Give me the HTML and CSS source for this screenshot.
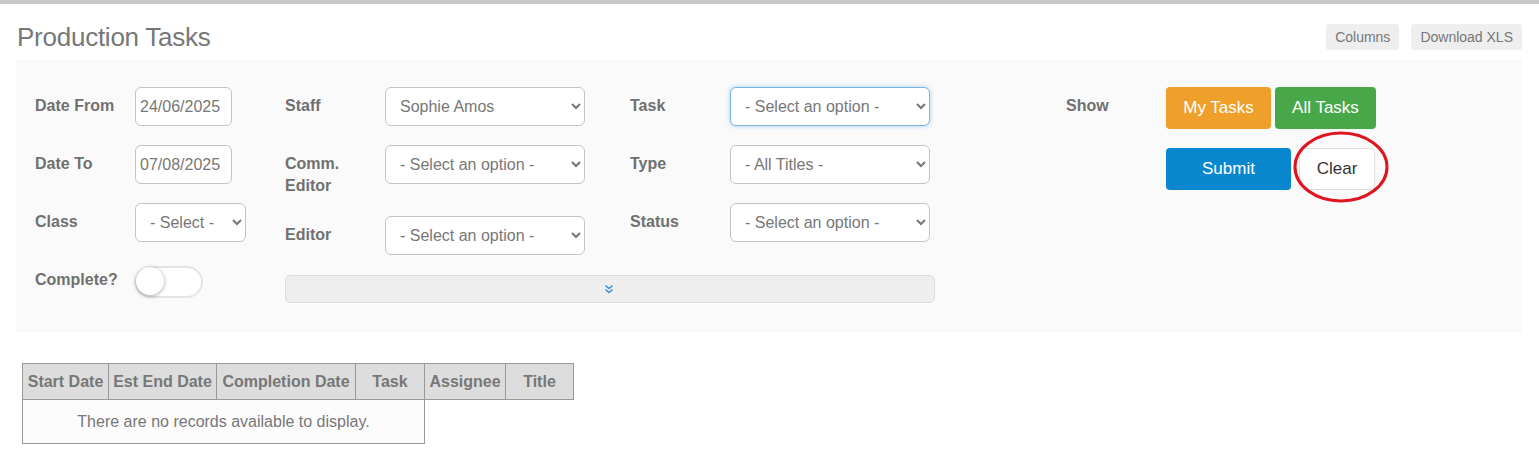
FILE: index.html
```html
<!DOCTYPE html>
<html lang="en">
<head>
  <meta charset="UTF-8">
  <title>Production Tasks</title>
  <link rel="stylesheet" href="styles.css">
</head>
<body>
  <!-- Page header -->
  <header class="page-header">
    <h1>Production Tasks</h1>
    <div class="header-actions">
      <button class="btn-light">Columns</button>
      <button class="btn-light">Download XLS</button>
    </div>
  </header>

  <!-- Filters -->
  <section class="filters">
    <div class="filter-col col-dates">
      <div class="field">
        <label class="label">Date From</label>
        <input class="input input-date" type="text" value="24/06/2025">
      </div>
      <div class="field">
        <label class="label">Date To</label>
        <input class="input input-date" type="text" value="07/08/2025">
      </div>
      <div class="field">
        <label class="label">Class</label>
        <select class="select select-small">
          <option>- Select -</option>
        </select>
      </div>
      <div class="field">
        <label class="label">Complete?</label>
        <span class="toggle"><span class="knob"></span></span>
      </div>
    </div>

    <div class="filter-group">
      <div class="group-cols">
        <div class="filter-col col-people">
          <div class="field">
            <label class="label">Staff</label>
            <select class="select"><option>Sophie Amos</option></select>
          </div>
          <div class="field">
            <label class="label">Comm.<br>Editor</label>
            <select class="select"><option>- Select an option -</option></select>
          </div>
          <div class="field">
            <label class="label">Editor</label>
            <select class="select"><option>- Select an option -</option></select>
          </div>
        </div>
        <div class="filter-col col-task">
          <div class="field">
            <label class="label">Task</label>
            <select class="select focused"><option>- Select an option -</option></select>
          </div>
          <div class="field">
            <label class="label">Type</label>
            <select class="select"><option>- All Titles -</option></select>
          </div>
          <div class="field">
            <label class="label">Status</label>
            <select class="select"><option>- Select an option -</option></select>
          </div>
        </div>
      </div>
      <div class="expand-bar">
        <svg width="10" height="10" viewBox="0 0 10 10">
          <path d="M1.5 1.5 L5 4.5 L8.5 1.5 M1.5 5.5 L5 8.5 L8.5 5.5" fill="none" stroke="#3d8fd1" stroke-width="1.6"/>
        </svg>
      </div>
    </div>

    <div class="filter-col col-show">
      <div class="field">
        <label class="label">Show</label>
        <div class="btn-row">
          <button class="btn btn-orange">My Tasks</button>
          <button class="btn btn-green">All Tasks</button>
        </div>
      </div>
      <div class="field">
        <span class="label"></span>
        <div class="btn-row btn-row-wide">
          <button class="btn btn-blue">Submit</button>
          <span class="clear-wrap">
            <button class="btn btn-white">Clear</button>
            <svg class="circle-mark" width="100" height="74" viewBox="0 0 100 74">
              <ellipse cx="50" cy="37" rx="46" ry="34" fill="none" stroke="#e0141e" stroke-width="3"/>
            </svg>
          </span>
        </div>
      </div>
    </div>
  </section>

  <!-- Results -->
  <table class="results">
    <thead>
      <tr>
        <th class="w-start">Start Date</th>
        <th class="w-end">Est End Date</th>
        <th class="w-comp">Completion Date</th>
        <th class="w-task">Task</th>
        <th class="w-assignee">Assignee</th>
        <th class="w-title">Title</th>
      </tr>
    </thead>
    <tbody>
      <tr>
        <td colspan="4" class="empty">There are no records available to display.</td>
      </tr>
    </tbody>
  </table>
</body>
</html>
```

FILE: styles.css
```css
body {
  margin: 0;
  font-family: "Liberation Sans", Arial, sans-serif;
  color: #777;
  background: #fff;
  border-top: 4px solid #c9c9c9;
}
.page-header {
  display: flex;
  justify-content: space-between;
  align-items: center;
  padding: 18px 17px 0 17px;
  margin-bottom: 8px;
}
.page-header h1 {
  margin: 0;
  font-size: 26px;
  line-height: 30px;
  font-weight: normal;
  letter-spacing: -0.25px;
  color: #777;
}
.header-actions {
  display: flex;
  gap: 12px;
}
.btn-light {
  background: #eee;
  border: none;
  border-radius: 3px;
  color: #777;
  font-family: inherit;
  font-size: 14px;
  height: 26px;
  padding: 0 9px;
}
.filters {
  display: flex;
  margin: 0 17px 0 16px;
  padding: 27px 0 10px 19px;
  background: #fafafa;
}
.filter-col {
  display: flex;
  flex-direction: column;
}
.col-dates {
  width: 250px;
}
.filter-group {
  width: 650px;
}
.group-cols {
  display: flex;
}
.col-people {
  width: 345px;
}
.col-task {
  width: 305px;
}
.col-show {
  margin-left: 131px;
}
.field {
  display: flex;
  align-items: flex-start;
  margin-bottom: 19px;
}
.label {
  flex: 0 0 100px;
  font-size: 16px;
  font-weight: bold;
  line-height: 22px;
  padding-top: 8px;
  color: #707070;
}
.input, .select {
  box-sizing: border-box;
  height: 39px;
  border: 1px solid #c4c4c4;
  border-radius: 6px;
  background: #fff;
  color: #777;
  font-family: inherit;
  font-size: 16px;
}
.input {
  padding: 0 4px;
}
.input-date {
  width: 97px;
}
.select {
  width: 200px;
  padding: 0 10px 0 10px;
}
.select-small {
  width: 111px;
}
.select.focused {
  border-color: #7ab3e0;
  box-shadow: 0 0 5px rgba(102, 175, 233, 0.55);
  outline: none;
}
.toggle {
  box-sizing: border-box;
  display: inline-block;
  width: 68px;
  height: 32px;
  margin-top: 5px;
  border: 2px solid #e4e4e4;
  border-radius: 16px;
  background: #fff;
  position: relative;
}
.toggle .knob {
  position: absolute;
  left: -1px;
  top: -1px;
  width: 28px;
  height: 28px;
  border-radius: 50%;
  background: #fff;
  box-shadow: 0 1px 4px rgba(0, 0, 0, 0.35);
}
.expand-bar {
  box-sizing: border-box;
  height: 28px;
  margin-top: 1px;
  margin-bottom: 19px;
  background: #eee;
  border: 1px solid #dcdcdc;
  border-radius: 5px;
  display: flex;
  align-items: center;
  justify-content: center;
  padding-right: 2px;
}
.btn-row {
  display: flex;
  gap: 4px;
}
.btn-row-wide {
  gap: 8px;
}
.btn {
  height: 42px;
  border: none;
  border-radius: 4px;
  color: #fff;
  font-family: inherit;
  font-size: 17px;
  padding: 0;
}
.btn-orange {
  width: 105px;
  background: #eea02b;
}
.btn-green {
  width: 101px;
  background: #48a849;
}
.btn-blue {
  width: 125px;
  background: #0887cf;
}
.btn-white {
  width: 76px;
  background: #fff;
  border: 1px solid #ddd;
  color: #333;
}
.clear-wrap {
  position: relative;
  display: inline-block;
}
.circle-mark {
  position: absolute;
  left: -8px;
  top: -18px;
  pointer-events: none;
}
.results {
  margin: 31px 0 0 22px;
  border-collapse: collapse;
  font-size: 16px;
  color: #777;
}
.results th {
  box-sizing: border-box;
  height: 36px;
  padding: 0 4px;
  background: #ddd;
  border: 1px solid #999;
  font-weight: bold;
  white-space: nowrap;
}
.results td.empty {
  height: 41px;
  text-align: center;
  background: #fcfcfc;
  border: 1px solid #999;
}
.w-start { width: 86px; }
.w-end { width: 108px; }
.w-comp { width: 139px; }
.w-task { width: 69px; }
.w-assignee { width: 81px; }
.w-title { width: 68px; }
```
